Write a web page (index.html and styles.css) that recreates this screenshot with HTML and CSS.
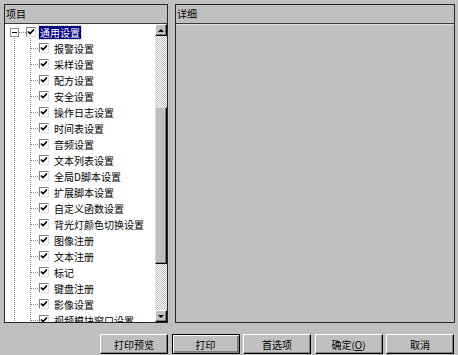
FILE: index.html
```html
<!DOCTYPE html>
<html>
<head>
<meta name="viewport" content="width=device-width, initial-scale=1">
<link rel="stylesheet" href="styles.css">
</head>
<body>

<div class="dialog">
  <div class="panes">
    <div class="pane pane-left">
      <div class="pane-head">项目</div>
      <div class="list">
        <div class="tree">
          <div class="node root">
            <span class="expander"></span><span class="hline short"></span>
            <span class="check"><svg width="8" height="8" viewBox="0 0 8 8"><polyline points="1,3.5 3,5.5 7,1.5" fill="none" stroke="#000" stroke-width="1.7"/></svg></span>
            <span class="label selected">通用设置</span>
          </div>
          <div class="node child"><span class="hline"></span><span class="check"><svg width="8" height="8" viewBox="0 0 8 8"><polyline points="1,3.5 3,5.5 7,1.5" fill="none" stroke="#000" stroke-width="1.7"/></svg></span><span class="label">报警设置</span></div>
          <div class="node child"><span class="hline"></span><span class="check"><svg width="8" height="8" viewBox="0 0 8 8"><polyline points="1,3.5 3,5.5 7,1.5" fill="none" stroke="#000" stroke-width="1.7"/></svg></span><span class="label">采样设置</span></div>
          <div class="node child"><span class="hline"></span><span class="check"><svg width="8" height="8" viewBox="0 0 8 8"><polyline points="1,3.5 3,5.5 7,1.5" fill="none" stroke="#000" stroke-width="1.7"/></svg></span><span class="label">配方设置</span></div>
          <div class="node child"><span class="hline"></span><span class="check"><svg width="8" height="8" viewBox="0 0 8 8"><polyline points="1,3.5 3,5.5 7,1.5" fill="none" stroke="#000" stroke-width="1.7"/></svg></span><span class="label">安全设置</span></div>
          <div class="node child"><span class="hline"></span><span class="check"><svg width="8" height="8" viewBox="0 0 8 8"><polyline points="1,3.5 3,5.5 7,1.5" fill="none" stroke="#000" stroke-width="1.7"/></svg></span><span class="label">操作日志设置</span></div>
          <div class="node child"><span class="hline"></span><span class="check"><svg width="8" height="8" viewBox="0 0 8 8"><polyline points="1,3.5 3,5.5 7,1.5" fill="none" stroke="#000" stroke-width="1.7"/></svg></span><span class="label">时间表设置</span></div>
          <div class="node child"><span class="hline"></span><span class="check"><svg width="8" height="8" viewBox="0 0 8 8"><polyline points="1,3.5 3,5.5 7,1.5" fill="none" stroke="#000" stroke-width="1.7"/></svg></span><span class="label">音频设置</span></div>
          <div class="node child"><span class="hline"></span><span class="check"><svg width="8" height="8" viewBox="0 0 8 8"><polyline points="1,3.5 3,5.5 7,1.5" fill="none" stroke="#000" stroke-width="1.7"/></svg></span><span class="label">文本列表设置</span></div>
          <div class="node child"><span class="hline"></span><span class="check"><svg width="8" height="8" viewBox="0 0 8 8"><polyline points="1,3.5 3,5.5 7,1.5" fill="none" stroke="#000" stroke-width="1.7"/></svg></span><span class="label">全局D脚本设置</span></div>
          <div class="node child"><span class="hline"></span><span class="check"><svg width="8" height="8" viewBox="0 0 8 8"><polyline points="1,3.5 3,5.5 7,1.5" fill="none" stroke="#000" stroke-width="1.7"/></svg></span><span class="label">扩展脚本设置</span></div>
          <div class="node child"><span class="hline"></span><span class="check"><svg width="8" height="8" viewBox="0 0 8 8"><polyline points="1,3.5 3,5.5 7,1.5" fill="none" stroke="#000" stroke-width="1.7"/></svg></span><span class="label">自定义函数设置</span></div>
          <div class="node child"><span class="hline"></span><span class="check"><svg width="8" height="8" viewBox="0 0 8 8"><polyline points="1,3.5 3,5.5 7,1.5" fill="none" stroke="#000" stroke-width="1.7"/></svg></span><span class="label">背光灯颜色切换设置</span></div>
          <div class="node child"><span class="hline"></span><span class="check"><svg width="8" height="8" viewBox="0 0 8 8"><polyline points="1,3.5 3,5.5 7,1.5" fill="none" stroke="#000" stroke-width="1.7"/></svg></span><span class="label">图像注册</span></div>
          <div class="node child"><span class="hline"></span><span class="check"><svg width="8" height="8" viewBox="0 0 8 8"><polyline points="1,3.5 3,5.5 7,1.5" fill="none" stroke="#000" stroke-width="1.7"/></svg></span><span class="label">文本注册</span></div>
          <div class="node child"><span class="hline"></span><span class="check"><svg width="8" height="8" viewBox="0 0 8 8"><polyline points="1,3.5 3,5.5 7,1.5" fill="none" stroke="#000" stroke-width="1.7"/></svg></span><span class="label">标记</span></div>
          <div class="node child"><span class="hline"></span><span class="check"><svg width="8" height="8" viewBox="0 0 8 8"><polyline points="1,3.5 3,5.5 7,1.5" fill="none" stroke="#000" stroke-width="1.7"/></svg></span><span class="label">键盘注册</span></div>
          <div class="node child"><span class="hline"></span><span class="check"><svg width="8" height="8" viewBox="0 0 8 8"><polyline points="1,3.5 3,5.5 7,1.5" fill="none" stroke="#000" stroke-width="1.7"/></svg></span><span class="label">影像设置</span></div>
          <div class="node child"><span class="hline"></span><span class="check"><svg width="8" height="8" viewBox="0 0 8 8"><polyline points="1,3.5 3,5.5 7,1.5" fill="none" stroke="#000" stroke-width="1.7"/></svg></span><span class="label">视频模块窗口设置</span></div>
        </div>
        <div class="scrollbar">
          <div class="sb-btn"><span class="arrow-up"></span></div>
          <div class="sb-track"><div class="sb-thumb"></div></div>
          <div class="sb-btn"><span class="arrow-down"></span></div>
        </div>
      </div>
    </div>
    <div class="pane pane-right">
      <div class="pane-head">详细</div>
      <div class="pane-body"></div>
    </div>
  </div>

  <div class="buttons">
    <button class="btn">打印预览</button>
    <button class="btn btn-default">打印</button>
    <button class="btn">首选项</button>
    <button class="btn">确定(<u>O</u>)</button>
    <button class="btn">取消</button>
  </div>
</div>

</body>
</html>
```

FILE: styles.css
```css
* {
  box-sizing: border-box;
}

body {
  margin: 0;
  background-color: #c0c0c0;
  font-family: "Noto Sans CJK SC", "Liberation Sans", sans-serif;
  font-size: 10px;
  color: #000;
}

.dialog {
  width: 458px;
  height: 355px;
  padding: 4px 3px 0 4px;
}

.panes {
  display: flex;
  gap: 7px;
  height: 319px;
}

.pane {
  border: 1px solid #262626;
  display: flex;
  flex-direction: column;
}

.pane-left {
  width: 164px;
}

.pane-right {
  width: 280px;
}

.pane-head {
  height: 19px;
  line-height: 18px;
  padding-left: 1px;
  border-bottom: 1px solid #3a3a3a;
  flex: none;
}

.pane-body {
  flex: 1;
  border-top: 1px solid #dcdcdc;
}

.list {
  flex: 1;
  display: flex;
  min-height: 0;
}

.tree {
  flex: 1;
  background-color: #fff;
  overflow: hidden;
  background-image:
    repeating-linear-gradient(to bottom, #8a8a8a 0 1px, transparent 1px 2px),
    repeating-linear-gradient(to bottom, #8a8a8a 0 1px, transparent 1px 2px);
  background-size: 1px 100%, 1px 100%;
  background-position: 9px 12px, 25px 12px;
  background-repeat: no-repeat;
}

.node {
  height: 16px;
  display: flex;
  align-items: center;
  white-space: nowrap;
}

.root {
  padding-left: 5px;
}

.child {
  padding-left: 26px;
}

.expander {
  width: 9px;
  height: 9px;
  border: 1px solid #8a8a8a;
  background: #fff linear-gradient(#000, #000) center / 5px 1px no-repeat;
  flex: none;
}

.hline {
  width: 8px;
  height: 1px;
  background: repeating-linear-gradient(to right, #8a8a8a 0 1px, transparent 1px 2px);
  flex: none;
}

.hline.short {
  width: 7px;
}

.check {
  width: 10px;
  height: 10px;
  border: 1px solid;
  border-color: #808080 #dcdcdc #dcdcdc #808080;
  background-color: #fff;
  display: flex;
  align-items: center;
  justify-content: center;
  flex: none;
}

.label {
  margin-left: 4px;
  line-height: 13px;
  padding: 0 1px;
}

.root .label {
  margin-left: 3px;
}

.selected {
  background-color: #000080;
  color: #fff;
  outline: 1px dotted #c0c0c0;
}

.scrollbar {
  width: 12px;
  display: flex;
  flex-direction: column;
  flex: none;
}

.sb-btn {
  height: 12px;
  background-color: #c0c0c0;
  border: 1px solid;
  border-color: #fff #000 #000 #fff;
  box-shadow: inset -1px -1px #808080;
  display: flex;
  align-items: center;
  justify-content: center;
  flex: none;
}

.arrow-up {
  border-left: 3px solid transparent;
  border-right: 3px solid transparent;
  border-bottom: 3px solid #000;
}

.arrow-down {
  border-left: 3px solid transparent;
  border-right: 3px solid transparent;
  border-top: 3px solid #000;
}

.sb-track {
  flex: 1;
  background: repeating-conic-gradient(#c0c0c0 0 25%, #fff 0 50%) 0 0 / 2px 2px;
}

.sb-thumb {
  margin-top: 71px;
  height: 157px;
  background-color: #c0c0c0;
  border: 1px solid;
  border-color: #dcdcdc #000 #000 #dcdcdc;
  box-shadow: inset -1px -1px #808080;
}

.buttons {
  display: flex;
  justify-content: flex-end;
  gap: 3.5px;
  margin-top: 11px;
  padding-right: 1px;
}

.btn {
  width: 68px;
  height: 20px;
  padding: 0;
  font-family: inherit;
  font-size: 10px;
  color: #000;
  background-color: #c0c0c0;
  border: 1px solid;
  border-color: #fff #000 #000 #fff;
  box-shadow: inset -1px -1px #808080;
}

.btn-default {
  border-color: #000;
  box-shadow: inset 1px 1px #fff, inset -2px -2px #808080;
}
```
